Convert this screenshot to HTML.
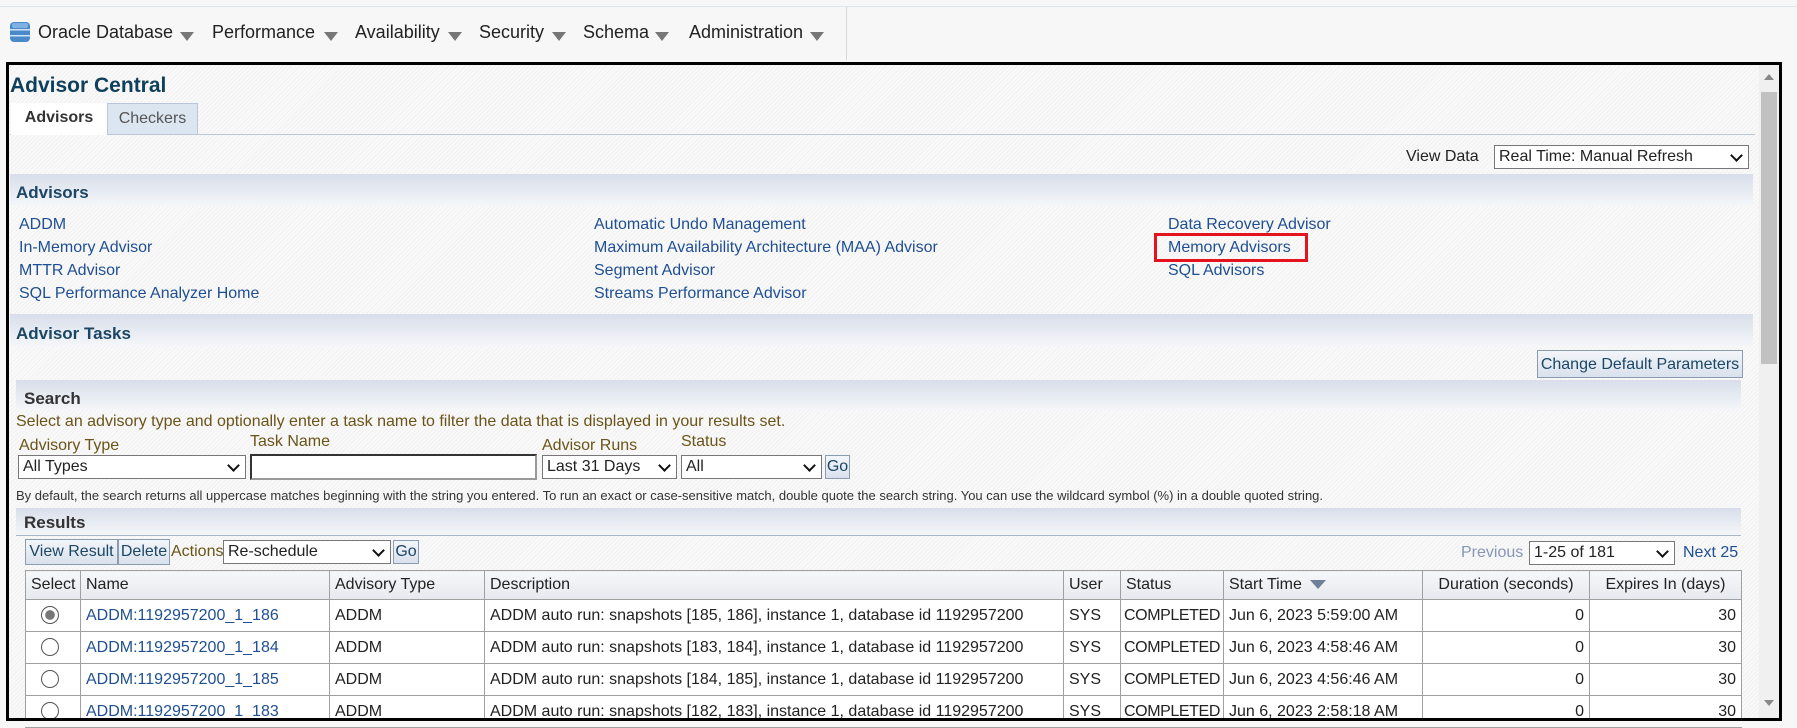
<!DOCTYPE html>
<html><head><meta charset="utf-8"><style>
*{box-sizing:border-box;margin:0;padding:0}
body{width:1797px;height:727px;overflow:hidden;font-family:"Liberation Sans",Arial,sans-serif;background:#f7f7f7;position:relative;color:#222}
.hatch{background:repeating-linear-gradient(135deg,#f9f9f9 0,#f9f9f9 2px,#f1f1f1 2px,#f1f1f1 3px)}
.a{position:absolute;white-space:nowrap}
.nav{font-size:18px;color:#222;top:22px}
.tri{position:absolute;top:32px;width:0;height:0;border-left:7px solid transparent;border-right:7px solid transparent;border-top:9px solid #777}
.band{position:absolute;left:10px;background:linear-gradient(#d8deea,#f4f6f9)}
.h{font-weight:bold;color:#1c4665;font-size:17px}
.lk{color:#1f4f93;font-size:16px}
.sel{position:absolute;background:#fff;border:1px solid #777;font-size:16px;padding:1px 4px;height:24px;line-height:20px}
.sel:after{content:"";position:absolute;right:7px;top:5px;width:7px;height:7px;border-right:2px solid #111;border-bottom:2px solid #111;transform:rotate(45deg)}
.btn{position:absolute;background:linear-gradient(#f3f6fa,#d9e1ec);border:1px solid #8b9bb0;color:#1c4665;font-size:16px;text-align:center;line-height:24px;height:26px}
.lab{color:#6b5418;font-size:16px}
table{position:absolute;left:25px;top:570px;border-collapse:collapse;font-size:16px;width:1716px;background:#fff;table-layout:fixed}
td,th{border:1px solid #a0a0a0;height:32px;padding:0 5px;white-space:nowrap;font-weight:normal;text-align:left;overflow:hidden}
th{background:linear-gradient(#f6f7f9,#e6e9ee);height:29px}
.r{text-align:right}
.st{padding:0 3px;letter-spacing:-0.4px}
.rad{display:inline-block;width:18px;height:18px;border:1.5px solid #555;border-radius:50%;background:#fff;vertical-align:middle;margin-left:10px}
</style></head><body>
<div class="a" style="left:0;top:6px;width:1797px;height:1px;background:#dfe4ea"></div>
<div class="a" style="left:846px;top:7px;width:1px;height:53px;background:#d8d8d8"></div>
<svg class="a" style="left:9px;top:21px" width="22" height="22" viewBox="0 0 22 22"><rect x="1" y="1" width="20" height="20" rx="4" fill="#4a8ac9"/><rect x="1" y="8" width="20" height="1.5" fill="#cfe2f5"/><rect x="1" y="14" width="20" height="1.5" fill="#cfe2f5"/><rect x="3" y="2" width="16" height="5" rx="2" fill="#7fb2e3"/></svg>
<div class="a nav" style="left:38px">Oracle Database</div><div class="tri" style="left:180px"></div>
<div class="a nav" style="left:212px">Performance</div><div class="tri" style="left:324px"></div>
<div class="a nav" style="left:355px">Availability</div><div class="tri" style="left:448px"></div>
<div class="a nav" style="left:479px">Security</div><div class="tri" style="left:552px"></div>
<div class="a nav" style="left:583px">Schema</div><div class="tri" style="left:655px"></div>
<div class="a nav" style="left:689px">Administration</div><div class="tri" style="left:810px"></div>

<div class="a hatch" style="left:6px;top:62px;width:1776px;height:659px;border:3px solid #000"></div>
<div class="a" style="left:1759px;top:65px;width:20px;height:653px;background:#f0f0f0"></div>
<div class="a" style="left:1761px;top:92px;width:16px;height:272px;background:#c1c1c1"></div>
<div class="a" style="left:1764px;top:74px;border-left:5px solid transparent;border-right:5px solid transparent;border-bottom:6px solid #888"></div>
<div class="a" style="left:1764px;top:700px;border-left:5px solid transparent;border-right:5px solid transparent;border-top:6px solid #888"></div>

<div class="a" style="left:10px;top:74px;font-size:21px;font-weight:bold;color:#0f3f5c">Advisor Central</div>
<div class="a" style="left:10px;top:134px;width:1745px;height:1px;background:#b9c7d8"></div>
<div class="a" style="left:11px;top:103px;width:96px;height:32px;background:#fff;font-weight:bold;font-size:16px;color:#333;text-align:center;line-height:30px">Advisors</div>
<div class="a" style="left:107px;top:103px;width:91px;height:31px;background:#dce6f1;border:1px solid #b9c7d8;border-bottom:0;font-size:16px;color:#555;text-align:center;line-height:29px">Checkers</div>

<div class="a" style="left:1406px;top:148px;font-size:16px">View Data</div>
<div class="sel" style="left:1494px;top:145px;width:255px">Real Time: Manual Refresh</div>

<div class="band" style="top:174px;width:1743px;height:32px"></div>
<div class="a h" style="left:16px;top:183px">Advisors</div>
<div class="a lk" style="left:19px;top:216px">ADDM</div>
<div class="a lk" style="left:19px;top:239px">In-Memory Advisor</div>
<div class="a lk" style="left:19px;top:262px">MTTR Advisor</div>
<div class="a lk" style="left:19px;top:285px">SQL Performance Analyzer Home</div>
<div class="a lk" style="left:594px;top:216px">Automatic Undo Management</div>
<div class="a lk" style="left:594px;top:239px">Maximum Availability Architecture (MAA) Advisor</div>
<div class="a lk" style="left:594px;top:262px">Segment Advisor</div>
<div class="a lk" style="left:594px;top:285px">Streams Performance Advisor</div>
<div class="a lk" style="left:1168px;top:216px">Data Recovery Advisor</div>
<div class="a lk" style="left:1168px;top:239px">Memory Advisors</div>
<div class="a lk" style="left:1168px;top:262px">SQL Advisors</div>
<div class="a" style="left:1154px;top:233px;width:154px;height:29px;border:3px solid #e3141e"></div>

<div class="band" style="top:314px;width:1743px;height:32px"></div>
<div class="a h" style="left:16px;top:324px">Advisor Tasks</div>
<div class="btn" style="left:1537px;top:350px;width:206px;height:28px;line-height:28px">Change Default Parameters</div>

<div class="band" style="top:380px;left:16px;width:1725px;height:30px"></div>
<div class="a h" style="left:24px;top:389px;color:#333">Search</div>
<div class="a lab" style="left:16px;top:413px">Select an advisory type and optionally enter a task name to filter the data that is displayed in your results set.</div>
<div class="a lab" style="left:19px;top:437px">Advisory Type</div>
<div class="a lab" style="left:250px;top:433px">Task Name</div>
<div class="a lab" style="left:542px;top:437px">Advisor Runs</div>
<div class="a lab" style="left:681px;top:433px">Status</div>
<div class="sel" style="left:18px;top:455px;width:228px">All Types</div>
<div class="a" style="left:250px;top:454px;width:287px;height:26px;background:#fff;border:2px solid #333;border-right-color:#999;border-bottom-color:#999"></div>
<div class="sel" style="left:542px;top:455px;width:135px">Last 31 Days</div>
<div class="sel" style="left:681px;top:455px;width:141px">All</div>
<div class="btn" style="left:825px;top:455px;width:25px;height:24px;line-height:22px">Go</div>
<div class="a" style="left:16px;top:488px;font-size:13px;color:#333">By default, the search returns all uppercase matches beginning with the string you entered. To run an exact or case-sensitive match, double quote the search string. You can use the wildcard symbol (%) in a double quoted string.</div>

<div class="band" style="top:508px;left:16px;width:1725px;height:28px;border-bottom:1px solid #a9b6c8"></div>
<div class="a h" style="left:24px;top:513px;color:#333">Results</div>
<div class="btn" style="left:25px;top:539px;width:93px">View Result</div>
<div class="btn" style="left:118px;top:539px;width:52px">Delete</div>
<div class="a lab" style="left:171px;top:543px">Actions</div>
<div class="sel" style="left:223px;top:540px;width:168px">Re-schedule</div>
<div class="btn" style="left:393px;top:540px;width:26px;height:24px;line-height:22px">Go</div>
<div class="a" style="left:1461px;top:544px;font-size:16px;color:#8597b5">Previous</div>
<div class="sel" style="left:1529px;top:541px;width:146px">1-25 of 181</div>
<div class="a lk" style="left:1683px;top:544px">Next 25</div>

<table>
<colgroup><col style="width:55px"><col style="width:249px"><col style="width:155px"><col style="width:579px"><col style="width:57px"><col style="width:103px"><col style="width:199px"><col style="width:167px"><col style="width:152px"></colgroup>
<tr><th>Select</th><th>Name</th><th>Advisory Type</th><th>Description</th><th>User</th><th>Status</th><th>Start Time <span style="display:inline-block;border-left:8px solid transparent;border-right:8px solid transparent;border-top:9px solid #6d7f99;margin-left:4px"></span></th><th style="text-align:center">Duration (seconds)</th><th style="text-align:center">Expires In (days)</th></tr>
<tr><td><span class="rad" style="background:radial-gradient(#777 40%,#fff 45%)"></span></td><td class="lk">ADDM:1192957200_1_186</td><td>ADDM</td><td>ADDM auto run: snapshots [185, 186], instance 1, database id 1192957200</td><td>SYS</td><td class="st">COMPLETED</td><td>Jun 6, 2023 5:59:00 AM</td><td class="r">0</td><td class="r">30</td></tr>
<tr><td><span class="rad"></span></td><td class="lk">ADDM:1192957200_1_184</td><td>ADDM</td><td>ADDM auto run: snapshots [183, 184], instance 1, database id 1192957200</td><td>SYS</td><td class="st">COMPLETED</td><td>Jun 6, 2023 4:58:46 AM</td><td class="r">0</td><td class="r">30</td></tr>
<tr><td><span class="rad"></span></td><td class="lk">ADDM:1192957200_1_185</td><td>ADDM</td><td>ADDM auto run: snapshots [184, 185], instance 1, database id 1192957200</td><td>SYS</td><td class="st">COMPLETED</td><td>Jun 6, 2023 4:56:46 AM</td><td class="r">0</td><td class="r">30</td></tr>
<tr><td><span class="rad"></span></td><td class="lk">ADDM:1192957200_1_183</td><td>ADDM</td><td>ADDM auto run: snapshots [182, 183], instance 1, database id 1192957200</td><td>SYS</td><td class="st">COMPLETED</td><td>Jun 6, 2023 2:58:18 AM</td><td class="r">0</td><td class="r">30</td></tr>
</table>
<div class="a" style="left:6px;top:718px;width:1776px;height:9px;background:#f7f7f7;border-top:3px solid #000"></div>
</body></html>
